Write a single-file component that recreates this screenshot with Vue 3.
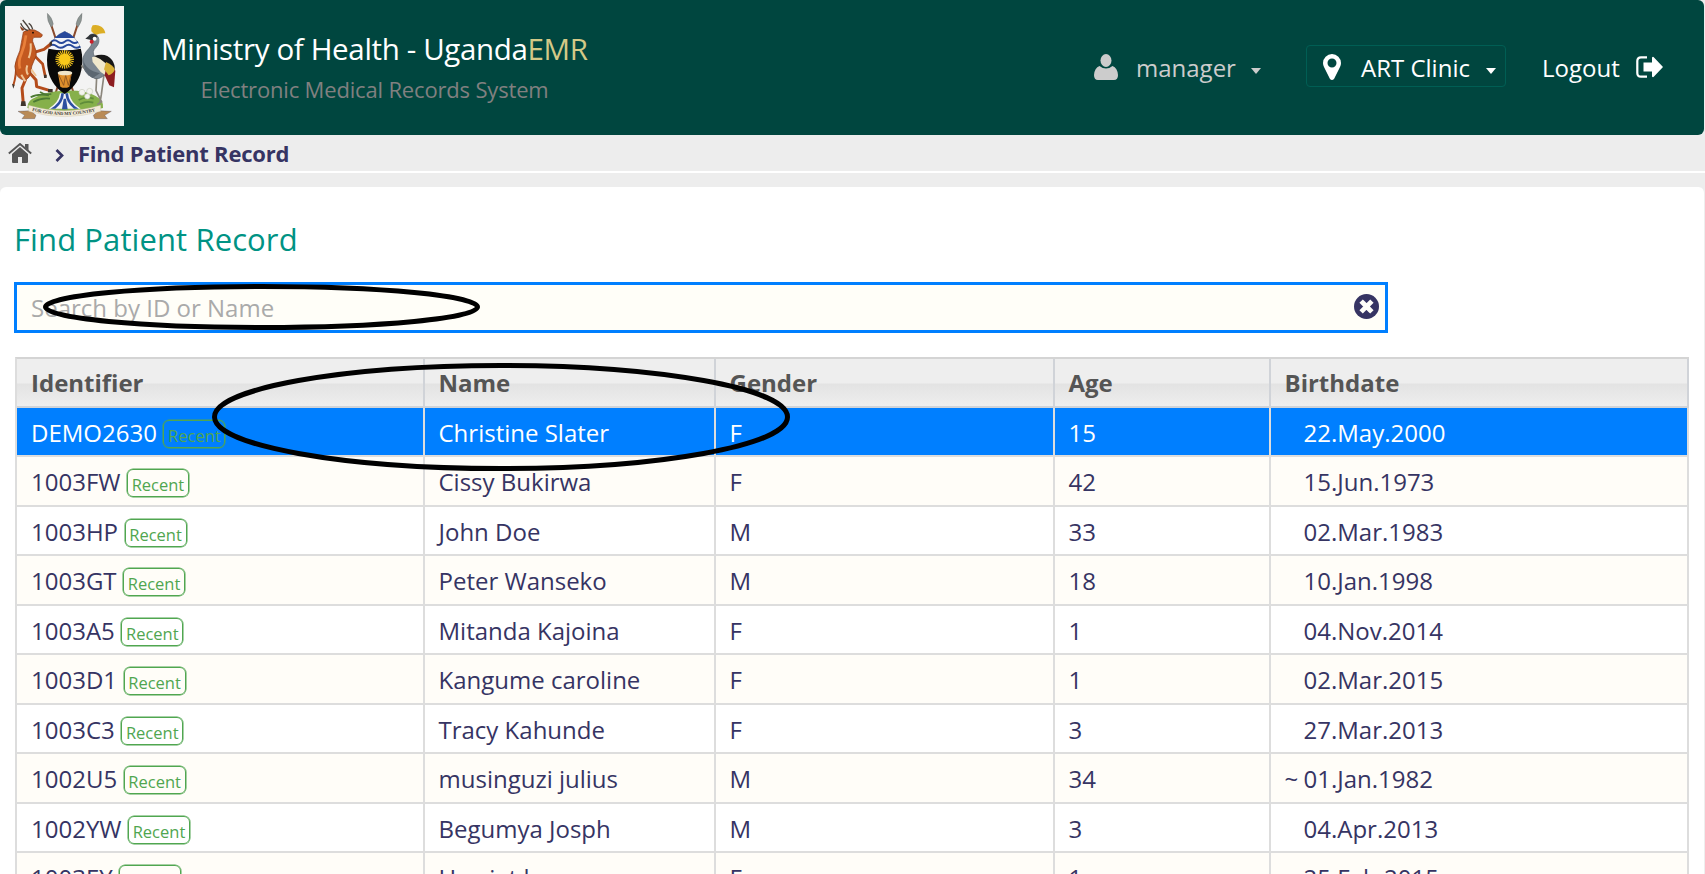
<script setup>
const rows = [
  ['DEMO2630', 'Christine Slater', 'F', '15', '22.May.2000'],
  ['1003FW', 'Cissy Bukirwa', 'F', '42', '15.Jun.1973'],
  ['1003HP', 'John Doe', 'M', '33', '02.Mar.1983'],
  ['1003GT', 'Peter Wanseko', 'M', '18', '10.Jan.1998'],
  ['1003A5', 'Mitanda Kajoina', 'F', '1', '04.Nov.2014'],
  ['1003D1', 'Kangume caroline', 'F', '1', '02.Mar.2015'],
  ['1003C3', 'Tracy Kahunde', 'F', '3', '27.Mar.2013'],
  ['1002U5', 'musinguzi julius', 'M', '34', '01.Jan.1982', true],
  ['1002YW', 'Begumya Josph', 'M', '3', '04.Apr.2013'],
  ['1003EY', 'Harriet k', 'F', '1', '25.Feb.2015'],
]
</script>

<template>
  <div class="page">
    <header class="top">
      <svg class="crest" viewBox="15 18 357 360">
        <rect x="15" y="18" width="357" height="360" fill="#f3f3f3" />
        <!-- spears -->
        <path d="M152 70L226 294M234 70L162 294" stroke="#8a4a2c" stroke-width="6" />
        <path d="M142 40q14 12 18 32l-6 10q-14-18-12-42zM246 40q-14 12-18 32l6 10q14-18 12-42z" fill="#8b9492" stroke="#666" />
        <!-- mound -->
        <path d="M82 324q0-24 25-32 35-20 88-20 60-2 92 16 26 14 22 36-55 14-112 14-60 0-115-14z" fill="#86b04a" />
        <path d="M92 292q20-12 55-6M100 306q25-14 50-10M120 276q14 10 34 6" stroke="#4c7a33" stroke-width="5" fill="none" />
        <path d="M236 300q20-12 45-4M240 312q20-10 40-4" stroke="#5f8c3a" stroke-width="5" fill="none" />
        <g fill="#f4f4ee" stroke="#c9ccc0" stroke-width="2"><circle cx="246" cy="277" r="9" /><circle cx="269" cy="274" r="9" /><circle cx="262" cy="289" r="8" /></g>
        <!-- river -->
        <path d="M180 280h28q4 28 34 46h-96q30-18 34-46z" fill="#f5f5f5" />
        <path d="M184 280q-2 30-32 46h14q24-18 26-46zM204 280q2 30 32 46h-14q-24-18-26-46zM191 296h7l5 32h-17z" fill="#2c4fa0" />
        <!-- shield -->
        <path d="M194 94q28 12 44 40 12 26 8 64-6 54-52 84-46-30-52-84-4-38 8-64 16-28 44-40z" fill="#080808" />
        <path d="M194 94q28 12 44 40l5 12q-49 10-98 0l5-12q16-28 44-40z" fill="#f2f4f8" />
        <path d="M194 94q20 8 31 20h-62q12-12 31-20z" fill="#27489b" />
        <path d="M154 125q10-8 20 0t20 0 20 0 20 0M147 139q12-9 23 0t24 0 24 0 23 0" fill="none" stroke="#27489b" stroke-width="6" />
        <g stroke="#f4c51d" stroke-width="3.500">
          <path v-for="n in 12" :key="n" :transform="`rotate(${n * 15} 194 178)`" d="M194 150V206" />
        </g>
        <circle cx="194" cy="178" r="17" fill="#f8c91a" />
        <path d="M174 220l7 40q13 7 27 0l7-40z" fill="#df8f2c" />
        <path d="M177 226l14 30 6-30 8 30 8-30" stroke="#8a5320" stroke-width="2.500" fill="none" />
        <ellipse cx="195" cy="219" rx="22" ry="7" fill="#efe5ca" />
        <!-- kob -->
        <g fill="none" stroke="#b44c1c" stroke-linejoin="round">
          <path d="M48 190q2 34-8 66" stroke-width="6" />
          <path d="M98 162L128 192 136 230" stroke-width="8" />
          <path d="M100 158L132 148 152 132" stroke-width="9" />
          <path d="M58 206L76 240 66 264 70 312" stroke-width="9" />
          <path d="M78 206L108 240 110 260 150 272" stroke-width="9" />
        </g>
        <path d="M70 96q14-10 34-6 14 6 23 14 0 6-5 8l-20 0q-6 4-4 12l10 28q4 16-6 30-8 14-10 36-2 16-16 22-20 0-28-20-8-20 2-44 12-24 14-48z" fill="#c35920" stroke="#8a3a16" stroke-width="2" />
        <path d="M78 106q-4 32-14 56-10 22-4 44" stroke="#e9803b" stroke-width="8" fill="none" />
        <path d="M92 130q2 26-6 44M82 196q-6 16 2 28M64 224l12 20M94 208l14 20" stroke="#efc596" stroke-width="6" fill="none" />
        <path d="M66 92q-6-8-6-14l14 12z" fill="#8a3a16" />
        <path d="M84 92q-14-4-22-22M90 90q-8-14-22-30M98 88q-4-14-12-18" stroke="#49423c" stroke-width="4" fill="none" />
        <path d="M64 304h12l2 14H62zM144 267h14v10h-14zM132 224h8v10h-8zM149 126l7-3v13l-7 2zM36 252l8 2-4 12z" fill="#40352d" />
        <circle cx="99" cy="98" r="2.500" />
        <!-- crane -->
        <path d="M290 232l-2 40 18 36M312 224l-8 60-4 24-8 6M288 236L262 214 244 196" stroke="#8b867c" stroke-width="5" fill="none" />
        <path d="M274 94q-2-10 4-18 14-4 26 4 10 6 12 20-16-2-30 6z" fill="#dcae25" />
        <path d="M268 106q14-10 26 4 8 16-6 32-14 12-4 28l30 20 4 30q-20 24-42 12-28-14-28-50 0-18 20-38 12-14 4-26z" fill="#7c8791" stroke="#56606a" stroke-width="2" />
        <path d="M276 172q30-12 52 6 16 20 16 50l-18 4-24-16-24-30z" fill="#f0e8cc" />
        <path d="M282 168q36-12 54 12 10 14 8 30-14-2-24-18-16-16-38-24z" fill="#171717" />
        <path d="M320 194q20 6 26 18l-4 50-14-6-14-30z" fill="#8d1d20" />
        <path d="M318 186q20 8 26 22-2 12-18 18l-14-18z" fill="#d9b137" />
        <path d="M250 178q4 32 50 42l-22 14q-28-12-28-56z" fill="#5c6771" />
        <path d="M270 104q12-6 22 4l-4 12-14 0-18-4z" fill="#303438" />
        <circle cx="284" cy="116" r="6" fill="#fff" /><circle cx="275" cy="125" r="6" fill="#c9202a" />
        <!-- motto -->
        <path d="M54 334l38-2 16 14-4 10H66l8-10zM334 334l-38-2-16 14 4 10h38l-8-10z" fill="#b98b57" stroke="#4d4a58" />
        <path d="M86 316q108 32 216 0v18q-108 32-216 0z" fill="#f3ead6" stroke="#c9bfa9" />
        <path id="motto" d="M96 332q98 26 196 0" fill="none" />
        <text class="motto"><textPath href="#motto" textLength="192">FOR GOD AND MY COUNTRY</textPath></text>
      </svg>
      <div class="brand">
        <div class="title">Ministry of Health - Uganda<span class="emr">EMR</span></div>
        <div class="subtitle">Electronic Medical Records System</div>
      </div>
      <nav class="nav">
        <div class="user">
          <svg class="i-user" viewBox="0 0 24 26"><ellipse cx="12" cy="6.500" rx="5.500" ry="6.500" /><path d="M5.500 12q6.500 5 13 0 5 2 5.500 9 0 5-4 5H4q-4 0-4-5 .5-7 5.500-9z" /></svg>
          <span class="t-user">manager</span><i class="caret"></i>
        </div>
        <div class="clinic">
          <svg class="i-pin" viewBox="0 0 18 26"><path fill-rule="evenodd" d="M9 0a9 9 0 0 1 9 9q0 2-1 4l-6 12q-2 2-4 0L1 13Q0 11 0 9a9 9 0 0 1 9-9zm0 4.500a4.500 4.500 0 1 0 0 9 4.500 4.500 0 0 0 0-9z" /></svg>
          <span class="t-clinic">ART Clinic</span><i class="caret"></i>
        </div>
        <div class="logout">
          <span class="t-logout">Logout</span>
          <svg class="i-out" viewBox="0 0 27 22"><path d="M11 1.300H5Q1.300 1.300 1.300 5v12q0 3.700 3.700 3.700h6" fill="none" stroke="#fff" stroke-width="2.200" /><path d="M7.500 6.500H16V1.500q1-1.500 2 0l9 9.500-9 9.500q-1 1.500-2 0V15.500H7.500z" /></svg>
        </div>
      </nav>
    </header>

    <div class="crumbs">
      <svg class="i-home" viewBox="0 0 24 20"><path d="M12 4l8 7v8q0 1-1 1h-5v-6h-4v6H5q-1 0-1-1v-8z" /><path d="M.8 10.500L12 1l11.200 9.500" fill="none" stroke="#555" stroke-width="1.900" /><path d="M17 1h3.500v6.500L17 4.500z" /></svg>
      <svg class="i-chev" viewBox="0 0 9 13"><path d="M1.500 1l5.500 5.500L1.500 12" fill="none" stroke="#363463" stroke-width="2.700" /></svg>
      <span class="crumb">Find Patient Record</span>
    </div>

    <main class="content">
      <h1 class="heading">Find Patient Record</h1>
      <div class="search">
        <span class="placeholder">Search by ID or Name</span>
        <svg class="i-clear" viewBox="0 0 25 25"><circle cx="12.500" cy="12.500" r="12.500" /><path d="M8.800 8.800l7.400 7.400M16.200 8.800l-7.400 7.400" stroke="#fffef8" stroke-width="4.800" stroke-linecap="square" /></svg>
        <svg class="mark mark-search" viewBox="0 0 438 46"><ellipse cx="219" cy="23" rx="216.500" ry="20.500" /></svg>
      </div>
      <div class="grid">
        <div class="row head">
          <div>Identifier</div><div>Name</div><div>Gender</div><div>Age</div><div>Birthdate</div>
        </div>
        <div v-for="(r, i) in rows" :key="r[0]" class="row" :class="{ odd: i % 2, selected: i === 0 }">
          <div><span class="ident">{{ r[0] }}</span><span class="badge">Recent</span></div>
          <div>{{ r[1] }}</div>
          <div>{{ r[2] }}</div>
          <div>{{ r[3] }}</div>
          <div><span class="approx">{{ r[5] ? '~' : '' }}</span>{{ r[4] }}</div>
        </div>
        <svg class="mark mark-row" viewBox="0 0 578 108"><ellipse cx="289" cy="54" rx="286.500" ry="51.500" /></svg>
      </div>
    </main>
  </div>
</template>

<style>
body { background: #fff; overflow: hidden; }
</style>

<style scoped>
.page { width: 1705px; height: 874px; overflow: hidden; background: #ededed; font-family: "Open Sans", "Noto Sans", sans-serif; color: #363463; box-sizing: border-box; }
.page * { box-sizing: border-box; }
.top { height: 135px; width: 1704px; background: #00463f; border-radius: 6px; display: flex; align-items: flex-start; padding: 6px 0 0 5px; white-space: nowrap; }
.crest { width: 119px; height: 120px; display: block; flex: none; }
.motto { font-family: "Liberation Serif", serif; font-weight: bold; font-size: 14px; fill: #443f3c; }
.brand { width: 426px; margin: 21px 0 0 37px; text-align: center; flex: none; }
.title { font-size: 29.500px; line-height: 44px; letter-spacing: -0.350px; color: #fff; }
.emr { color: #d3c987; }
.subtitle { font-size: 22px; line-height: 30px; letter-spacing: -0.170px; margin-top: 3px; padding-left: 1px; color: #808080; }
.nav { margin-left: auto; margin-right: 41px; margin-top: 39px; display: flex; color: #fff; font-size: 24px; line-height: 38px; }
.nav svg { fill: #fff; flex: none; }
.user, .clinic, .logout { display: flex; height: 42px; }
.user { color: #ccc; width: 212px; }
.user .i-user { width: 24px; height: 26px; margin: 9px 18px 0 0; fill: #ccc; }
.t-user { width: 115px; }
.caret { width: 0; height: 0; border: 5.500px solid transparent; border-bottom: 0; border-top: 6px solid currentColor; margin-top: 23px; }
.clinic { width: 200px; border: 1px solid #005e54; border-radius: 4px; padding-left: 16px; }
.i-pin { width: 18px; height: 26px; margin: 8px 20px 0 0; }
.t-clinic { width: 125px; padding-top: 3px; }
.clinic .caret { margin-top: 22px; }
.logout { margin-left: 36px; width: 121px; justify-content: space-between; }
.i-out { width: 27px; height: 22px; margin-top: 11px; }
.t-user, .t-logout { padding-top: 4px; }
.crumbs { height: 38px; border-bottom: 2px solid #fff; display: flex; padding-left: 8px; }
.i-home { width: 24px; height: 20px; margin-top: 8px; fill: #555; }
.i-chev { width: 9px; height: 13px; margin: 14px 0 0 23px; }
.crumb { font-weight: 700; font-size: 22px; line-height: 36px; letter-spacing: -0.220px; margin-left: 14px; white-space: nowrap; }
.content { margin-top: 14px; background: #fff; border-radius: 6px; height: 700px; border-right: 1px solid #eee; padding: 30px 0 0 14px; }
.heading { margin: 0; font-weight: 400; font-size: 31px; line-height: 45px; letter-spacing: 0.100px; color: #009384; }
.search { position: relative; margin-top: 20px; width: 1374px; height: 51px; border: 3px solid #007fff; background: #fffef8; display: flex; justify-content: space-between; padding: 0 6px 0 14px; }
.placeholder { font-size: 24px; line-height: 46px; color: #aaa; }
.i-clear { width: 25px; height: 25px; margin-top: 9px; fill: #363463; }
.mark { position: absolute; fill: none; stroke: #000; stroke-width: 5; }
.mark-search { left: 26px; top: -1px; width: 437px; height: 46px; }
.grid { position: relative; margin: 24px 0 0 1px; width: 1674px; border-left: 2px solid #ddd; border-top: 2px solid #d4d4d4; }
.row { display: grid; grid-template-columns: 407.500px 291px 339px 216px 418.500px; grid-template-rows: 100%; height: 49.500px; font-size: 24px; line-height: 49.500px; white-space: nowrap; background: #fff; }
.row > div { min-height: 0; border-right: 2px solid #ddd; border-bottom: 2px solid #ddd; padding-left: 14px; display: flex; }
.row.head { height: 48.500px; line-height: 48px; font-weight: 700; color: #555; background: linear-gradient(#eee 0, #eee 48%, #e3e3e3 52%, #efefef 100%); }
.row.head > div { border-color: #d0d3d8; }
.row.odd { background: #fffdf8; }
.row.selected { background: #007fff; color: #fff; }
.badge { color: #50a650; border: 1px solid #50a650; box-shadow: 0 0 0 0.500px #50a650; border-radius: 6px; height: 28px; width: 62px; font-size: 16.500px; line-height: 29px; text-align: center; margin: 12px 0 0 6.500px; }
.approx { width: 19px; flex: none; }
.mark-row { left: 195px; top: 4px; width: 578px; height: 108px; }
</style>
